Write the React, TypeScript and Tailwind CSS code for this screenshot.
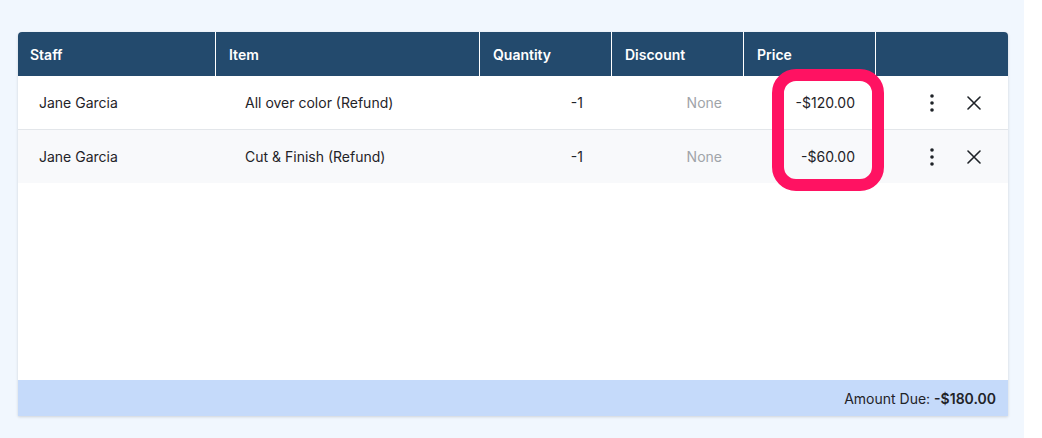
import React from 'react';

type Line = { staff: string; item: string; qty: string; discount: string; price: string };

const lines: Line[] = [
  { staff: 'Jane Garcia', item: 'All over color (Refund)', qty: '-1', discount: 'None', price: '-$120.00' },
  { staff: 'Jane Garcia', item: 'Cut & Finish (Refund)', qty: '-1', discount: 'None', price: '-$60.00' },
];

const cols = 'grid grid-cols-[197px_264px_132px_132px_132px_133px]';

function DotsIcon() {
  return (
    <svg width="6" height="20" viewBox="0 0 6 20" fill="#1f2328">
      <circle cx="3" cy="3" r="1.8" />
      <circle cx="3" cy="10" r="1.8" />
      <circle cx="3" cy="17" r="1.8" />
    </svg>
  );
}

function CloseIcon() {
  return (
    <svg width="14" height="14" viewBox="0 0 14 14" stroke="#1f2328" strokeWidth="1.6" strokeLinecap="round">
      <path d="M1 1l12 12M13 1L1 13" />
    </svg>
  );
}

function HeaderRow() {
  const heads = ['Staff', 'Item', 'Quantity', 'Discount', 'Price', ''];
  return (
    <div className={`${cols} h-[44px] bg-[#234a6d] text-white text-[14px] font-semibold`}>
      {heads.map((h, i) => (
        <div
          key={i}
          className={`flex items-center ${i === 0 ? 'pl-3' : 'pl-[13px] border-l border-white'}`}
        >
          {h}
        </div>
      ))}
    </div>
  );
}

function BodyRow({ line, odd }: { line: Line; odd: boolean }) {
  return (
    <div
      className={`${cols} text-[14px] text-[#1f2328] ${odd ? 'h-[53px] bg-[#f8f9fb]' : 'h-[54px] bg-white border-b border-[#e3e6ea]'}`}
    >
      <div className="flex items-center pl-[21px]">{line.staff}</div>
      <div className="flex items-center pl-[30px]">{line.item}</div>
      <div className="flex items-center justify-end pr-[28px]">{line.qty}</div>
      <div className="flex items-center justify-end pr-[21px] text-[#a0a4a9]">{line.discount}</div>
      <div className="flex items-center justify-end pr-[20px]">{line.price}</div>
      <div className="flex items-center pl-[54px] gap-[32px]">
        <DotsIcon />
        <CloseIcon />
      </div>
    </div>
  );
}

export default function App() {
  return (
    <div className="w-[1042px] h-[438px] bg-white" style={{ fontFamily: 'Inter, "Noto Sans", sans-serif' }}>
      <div className="relative w-[1024px] h-[438px] bg-[#f1f7fe] pt-[32px] pl-[18px]">
        <div className="w-[990px] rounded-t-[4px] overflow-hidden bg-white shadow-[0_1px_3px_rgba(0,0,0,0.15)] flex flex-col">
          <HeaderRow />
          <div className="h-[304px] bg-white">
            {lines.map((l, i) => (
              <BodyRow key={i} line={l} odd={i % 2 === 1} />
            ))}
          </div>
          <div className="h-[36px] bg-[#c5dafa] flex items-center justify-end pr-[12px] text-[14px] text-[#1f2328]">
            <span>Amount Due:&nbsp;</span>
            <span className="font-semibold">-$180.00</span>
          </div>
        </div>
        <div className="absolute left-[772px] top-[69px] w-[112px] h-[122px] border-[12px] border-[#ff1262] rounded-[24px]" />
      </div>
    </div>
  );
}
